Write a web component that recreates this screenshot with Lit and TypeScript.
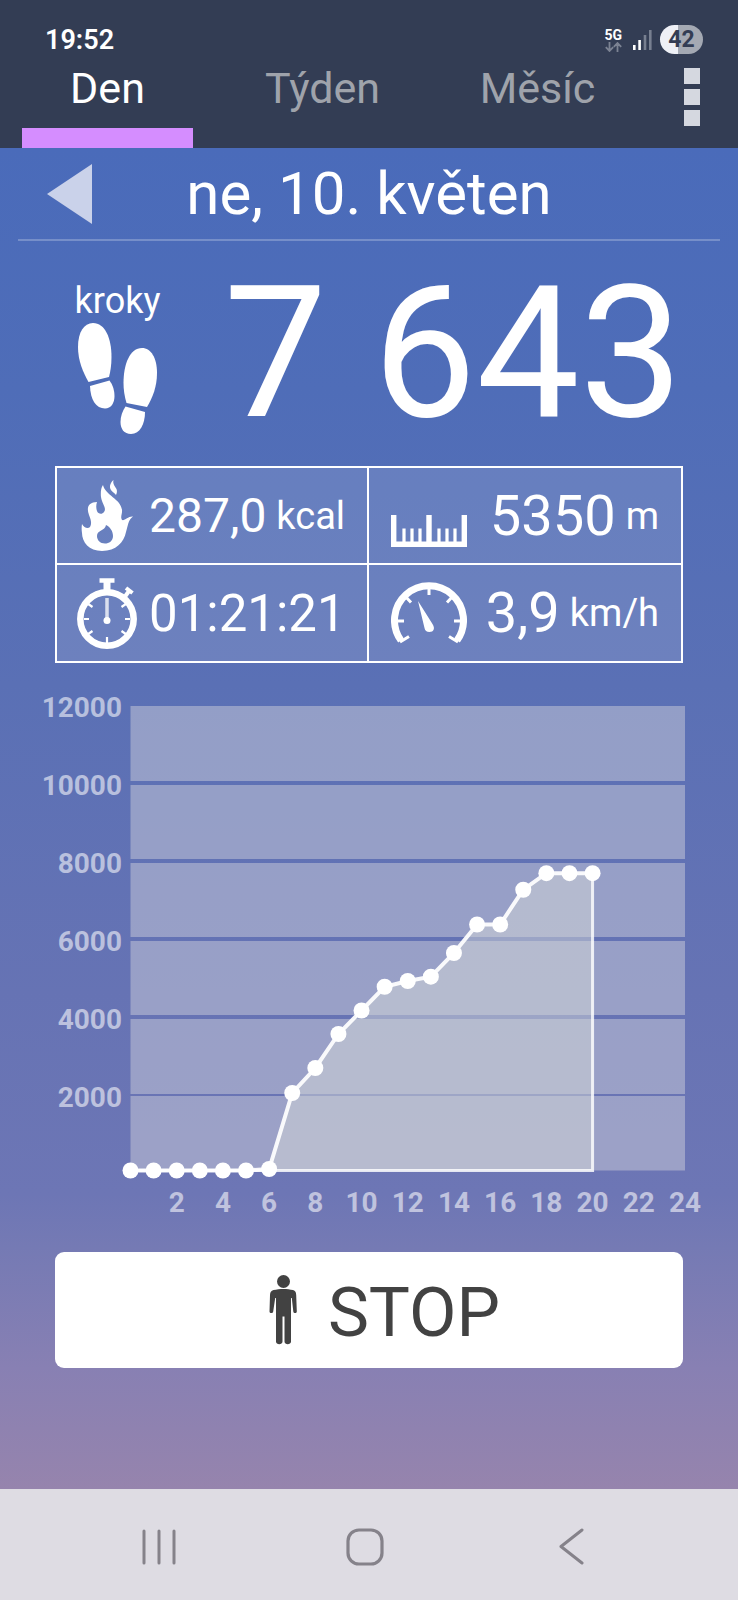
import { LitElement, html, svg, css } from "lit";
import { customElement, property, state } from "lit/decorators.js";
import { classMap } from "lit/directives/class-map.js";

const stepsIcon = html`<svg width="80" height="112" viewBox="0 0 80 112" fill="#fff" aria-hidden="true">
  <path d="M10.500 59C5 49 0 38 0 24 0 9 6 0 15 0c12 0 18.500 15 18.500 34 0 8-1 14-2.500 20z" />
  <path d="M12 63l19.500-5.500C35 62 36.500 68 36.500 73c0 7-3.500 12.500-9.500 12.500C18 85.500 12.500 77 12 63z" />
  <path d="M48.500 80c-2-7-3-13-3-20C45.500 41 52 25 64 25c9 0 15 10 15 25 0 13-4 24-10 34z" />
  <path d="M47.500 83.500L67 89c0 12-5 22-14 22-7 0-10.500-5-10.500-12 0-6 2-11 5-15.500z" />
</svg>`;

const flameIcon = html`<svg width="52" height="71" viewBox="0 0 52 71" fill="#fff" aria-hidden="true">
  <path fill-rule="evenodd" d="M21 71C8 71 1 62 1 53c-.5-3-.5-6 0-9 2 4 6 5 8 3 2-3 1-7-1-12C5 27 8 22 16 22c-1 3-1 6 0 9 1 3 5 4 7 1 3-4-2-8-3-15-.5-5 0-9 2-12 2 10 18 14 19 25 .5 4-2 7 0 10 3 1 6-4 11-3.500-5 3.500-5 9.500-7 15.500C43 62 35 71 21 71zM25 45c-1 6-9 5-9 11 0 4 3 7.500 8 7.500 4 0 8-2.500 8-7.500 0-5-3-9-7-11z" />
  <path d="M32.500 0c-1 4 1.500 6 3 9 .8 2 .5 4-.5 6-2-3-6.500-4-6-9 .3-2.500 2-5 3.500-6z" />
</svg>`;

const stopwatchIcon = html`<svg width="62" height="71" viewBox="0 0 62 71" fill="none" stroke="#fff" aria-hidden="true">
  <circle cx="31" cy="41" r="26.700" stroke-width="6.500" />
  <path stroke-width="4.500" d="M23.500 2.500h15" />
  <path stroke-width="7" d="M31 3v10" />
  <path stroke-width="4" d="M48 20l5-7" />
  <path stroke-width="4" d="M50 10l6.500 5" />
  <path stroke-width="2.200" d="M8 41h5M49 41h5M31 59v6M11.500 25.500l5 3.500M50.500 25.500l-5 3.500M11.500 56.500l5-3.500M50.500 56.500l-5-3.500" />
  <path stroke-width="3.500" stroke-opacity=".75" d="M31 20v20" />
  <circle cx="31" cy="42.500" r="3.500" fill="#fff" stroke="none" />
</svg>`;

const rulerIcon = html`<svg width="76" height="62" viewBox="0 2 76 62" fill="none" stroke="#fff" aria-hidden="true">
  <path stroke-width="5.400" d="M2.700 32v29.300h70.600V32M38 32v29" />
  <path stroke-width="3.200" d="M13 45.500V60M21 45.500V60M29 45.500V60M48 45.500V60M56 45.500V60M64 45.500V60" />
</svg>`;

const gaugeIcon = html`<svg width="76" height="62" viewBox="0 1 76 62" fill="none" stroke="#fff" aria-hidden="true">
  <path stroke-width="7" d="M10 59.500A34.500 34.500 0 1 1 66 59.500" />
  <path stroke-width="3" d="M38 5v9M4 40h9M72 40h-9M14 15l6 6.500M62 15l-6 6.500M9 61l9-5.500M67 61l-9-5.500" />
  <path fill="#fff" stroke="none" d="M27 20l14.500 23c3 4.500 1 8-3 8-3 0-4.500-1.500-5-4z" />
</svg>`;

const personIcon = html`<svg width="30" height="70" viewBox="0 0 30 70" fill="#424242" aria-hidden="true">
  <ellipse cx="15.500" cy="6.500" rx="6.500" ry="6.500" />
  <path d="M5.500 15c6-1.500 14-1.500 19.500 0 2.500.7 3 2 3.200 5l.6 16.500c0 2-3.300 2-3.500 0L23.800 23h-.8v43.500c0 3.500-6.500 3.500-6.500 0V41.500h-2v25c0 3.500-6.500 3.500-6.500 0V23h-.8L5.200 36.500c-.2 2-3.700 2-3.700 0L2 20c.2-3 1-4.300 3.500-5z" />
</svg>`;

@customElement("step-chart")
class StepChart extends LitElement {
  @property({ attribute: false }) values: number[] = [];

  static styles = css`
    :host { display: block; }
    .chart { display: block; width: 100%; height: auto; font-family: Roboto, sans-serif; }
    .band { fill: rgba(208, 208, 220, 0.48); }
    .label { fill: rgba(255, 255, 255, 0.56); font-size: 28px; font-weight: 700; }
    .y { text-anchor: end; }
    .x { text-anchor: middle; }
    .area { fill: rgba(209, 213, 216, 0.5); }
    .edge { fill: none; stroke: #fff; stroke-opacity: 0.82; stroke-width: 3; }
    .line { fill: none; stroke: #fff; stroke-opacity: 0.93; stroke-width: 4; }
    .dot { fill: #fff; }
  `;

  render() {
    const left = 130.5;
    const right = 685;
    const zero = 507.5;
    const top = 43;
    const px = (hour: number) => left + (hour * (right - left)) / 24;
    const py = (steps: number) => zero - steps * 0.0389;
    const grid = [2000, 4000, 6000, 8000, 10000];
    const gridY = (steps: number) => 510 - steps * 0.039;
    const edges = [zero, ...grid.map(gridY), top];
    const points = this.values.map((v, h) => `${px(h)},${py(v)}`);
    const last = px(this.values.length - 1);
    return html`<svg class="chart" viewBox="0 0 738 589" role="img" aria-label="kroky">
      ${edges.slice(1).map((upper, i) => {
        const start = upper === top ? top : upper + (i === 0 ? 1 : 2);
        const end = i === 0 ? zero : edges[i] - (i === 1 ? 1 : 2);
        return svg`<rect class="band" x=${left} y=${start} width=${right - left} height=${end - start} />`;
      })}
      ${[...grid, 12000].map((v) => svg`<text class="label y" x="122" y=${gridY(v) + 12}>${v}</text>`)}
      ${[2, 4, 6, 8, 10, 12, 14, 16, 18, 20, 22, 24].map(
        (h) => svg`<text class="label x" x=${px(h)} y="549">${h}</text>`
      )}
      <polygon class="area" points="${points.join(" ")} ${last},${zero}" />
      <polyline class="edge" points="${left},${zero} ${last},${zero} ${last},${py(this.values[this.values.length - 1])}" />
      <polyline class="line" points=${points.join(" ")} />
      ${this.values.map((v, h) => svg`<circle class="dot" cx=${px(h)} cy=${py(v)} r="8" />`)}
    </svg>`;
  }
}

@customElement("app-root")
class AppRoot extends LitElement {
  @state() private tab = "Den";

  static styles = css`
    :host {
      display: flex;
      flex-direction: column;
      min-height: 100vh;
      font-family: Roboto, sans-serif;
      color: #fff;
    }
    * { box-sizing: border-box; }
    svg { display: block; flex: none; }
    button {
      margin: 0;
      padding: 0;
      border: 0;
      background: none;
      color: inherit;
      font: inherit;
      cursor: pointer;
    }
    .top { background: #333d54; }
    .status {
      display: flex;
      align-items: center;
      padding: 25px 35px 0 45px;
      height: 54px;
    }
    .time { font-size: 27px; font-weight: 600; flex: 1; }
    .network { display: grid; justify-items: center; margin-right: 11px; font-size: 14px; line-height: 14px; font-weight: 700; }
    .signal { margin-right: 8px; }
    .battery {
      width: 43px;
      height: 29px;
      border-radius: 15px;
      background: linear-gradient(90deg, #eef0f6 42%, #a4a9b3 42%);
      color: #333d54;
      font-size: 23px;
      line-height: 29px;
      font-weight: 700;
      text-align: center;
    }
    .bar { display: flex; height: 94px; }
    .tabs { display: flex; flex: 1; }
    .tab {
      flex: 1;
      padding: 0 22px;
      display: flex;
      flex-direction: column;
      justify-content: space-between;
      font-size: 43px;
      line-height: 68px;
      color: #9fa3ab;
      text-align: center;
    }
    .tab.active { color: #fff; }
    .indicator { height: 20px; }
    .active .indicator { background: #d58dff; }
    .menu {
      width: 93px;
      display: flex;
      flex-direction: column;
      align-items: center;
      justify-content: center;
      gap: 5px;
      padding: 0 0 8px;
    }
    .square { width: 16px; height: 16px; background: #d5d8e0; }
    .page {
      flex: 1;
      background: linear-gradient(#4a6bba 0, #4f6db8 18%, #5a70b5 40%, #6673b4 63%, #6d76b5 78%, #757ab4 82%, #8880b3 91%, #9684ad 100%);
    }
    .date {
      display: grid;
      grid-template-columns: 100px 1fr 100px;
      align-items: center;
      height: 93px;
      margin: 0 18px;
      border-bottom: 2px solid rgba(255, 255, 255, 0.24);
    }
    .prev { padding-left: 29px; }
    .day { margin: 0; font-size: 60px; line-height: 70px; font-weight: 400; text-align: center; white-space: nowrap; }
    .total {
      display: flex;
      align-items: center;
      justify-content: space-between;
      height: 225px;
      padding: 0 55px;
    }
    .kind { display: grid; justify-items: center; width: 125px; padding-top: 7px; font-size: 36px; line-height: 44px; }
    .count { font-size: 184px; line-height: 217px; white-space: nowrap; }
    .stats {
      display: grid;
      grid-template-columns: repeat(2, minmax(0, 1fr));
      grid-template-rows: 97px 96px;
      margin: 0 55px;
      border: 2px solid #fff;
      background: rgba(255, 255, 255, 0.12);
    }
    .stat { display: flex; align-items: center; padding: 0 22px; }
    .stat:nth-child(odd) { padding: 0 10px 0 19px; border-right: 2px solid #fff; }
    .stat:nth-child(-n + 2) { border-bottom: 2px solid #fff; }
    .icon { display: flex; justify-content: center; min-width: 62px; margin-right: 11px; }
    .reading { display: flex; align-items: center; gap: 10px; margin: 0; white-space: nowrap; }
    .stat:nth-child(even) .reading { margin-left: auto; }
    .number { font-size: 51px; }
    .number.small { font-size: 48px; }
    .number.large { font-size: 56px; }
    .unit { font-size: 38px; }
    .stop {
      display: flex;
      align-items: center;
      justify-content: center;
      gap: 30px;
      width: calc(100% - 110px);
      height: 116px;
      margin: 0 55px;
      padding-left: 30px;
      border-radius: 9px;
      background: #fff;
      color: #424242;
      font-size: 69px;
      line-height: 80px;
    }
    .caption { padding-top: 6px; }
    .nav {
      display: grid;
      grid-template-columns: repeat(3, 1fr);
      height: 111px;
      padding: 0 63px 0 56px;
      background: #dedce3;
    }
    .key { display: flex; align-items: center; justify-content: center; padding-top: 4px; }
  `;

  private stats = [
    { icon: flameIcon, name: "kcal", value: "287,0", unit: "kcal", size: "small" },
    { icon: rulerIcon, name: "m", value: "5350", unit: "m", size: "large" },
    { icon: stopwatchIcon, name: "čas", value: "01:21:21", unit: "", size: "" },
    { icon: gaugeIcon, name: "km/h", value: "3,9", unit: "km/h", size: "large" },
  ];

  private hourly = [
    0, 0, 0, 0, 0, 0, 39, 1992, 2635, 3509, 4113, 4724, 4871, 4983, 5591, 6324, 6324, 7218, 7643, 7643, 7643,
  ];

  render() {
    return html`
      <header class="top">
        <div class="status">
          <time class="time">19:52</time>
          <div class="network">
            <span>5G</span>
            <svg width="17" height="10" viewBox="0 0 17 10" fill="none" stroke="#7c8393" stroke-width="1.800">
              <path d="M4.500 0v9M.8 5.200l3.700 3.800 3.700-3.800M12.500 10V1M8.800 4.800L12.500 1l3.700 3.800" />
            </svg>
          </div>
          <svg class="signal" width="19" height="20" viewBox="0 0 19 20">
            <rect x="0" y="15" width="2.600" height="5" fill="#fff" />
            <rect x="5.300" y="10" width="2.600" height="10" fill="#fff" />
            <rect x="10.700" y="5" width="2.600" height="15" fill="#777f90" />
            <rect x="16" y="0" width="2.600" height="20" fill="#777f90" />
          </svg>
          <div class="battery">42</div>
        </div>
        <div class="bar">
          <div class="tabs" role="tablist">
            ${["Den", "Týden", "Měsíc"].map(
              (name) => html`<button
                class=${classMap({ tab: true, active: name === this.tab })}
                role="tab"
                aria-selected=${name === this.tab}
                @click=${() => (this.tab = name)}
              >
                <span>${name}</span><span class="indicator"></span>
              </button>`
            )}
          </div>
          <button class="menu" aria-label="Menu">
            <span class="square"></span><span class="square"></span><span class="square"></span>
          </button>
        </div>
      </header>
      <main class="page">
        <div class="date">
          <button class="prev" aria-label="Předchozí den">
            <svg width="45" height="60" viewBox="0 0 45 60"><path fill="#cad2ea" d="M0 30L45 0v60z" /></svg>
          </button>
          <h1 class="day">ne, 10. květen</h1>
        </div>
        <section class="total">
          <div class="kind"><span>kroky</span>${stepsIcon}</div>
          <div class="count">7 643</div>
        </section>
        <dl class="stats">
          ${this.stats.map(
            (s) => html`<div class="stat">
              <dt class="icon" aria-label=${s.name}>${s.icon}</dt>
              <dd class="reading">
                <span class="number ${s.size}">${s.value}</span>
                ${s.unit ? html`<span class="unit">${s.unit}</span>` : ""}
              </dd>
            </div>`
          )}
        </dl>
        <step-chart .values=${this.hourly}></step-chart>
        <button class="stop">${personIcon}<span class="caption">STOP</span></button>
      </main>
      <nav class="nav">
        <button class="key" aria-label="Poslední aplikace">
          <svg width="34" height="36" viewBox="0 0 34 36" stroke="#85828a" stroke-width="3" stroke-linecap="round">
            <path d="M2 2v32M17 2v32M32 2v32" />
          </svg>
        </button>
        <button class="key" aria-label="Domů">
          <svg width="38" height="38" viewBox="0 0 38 38" fill="none" stroke="#85828a" stroke-width="3.200">
            <rect x="2" y="2" width="34" height="34" rx="11" />
          </svg>
        </button>
        <button class="key" aria-label="Zpět">
          <svg width="25" height="37" viewBox="0 0 25 37" fill="none" stroke="#85828a" stroke-width="3" stroke-linecap="round" stroke-linejoin="round">
            <path d="M23 2L2 18.500 23 35" />
          </svg>
        </button>
      </nav>
    `;
  }
}
